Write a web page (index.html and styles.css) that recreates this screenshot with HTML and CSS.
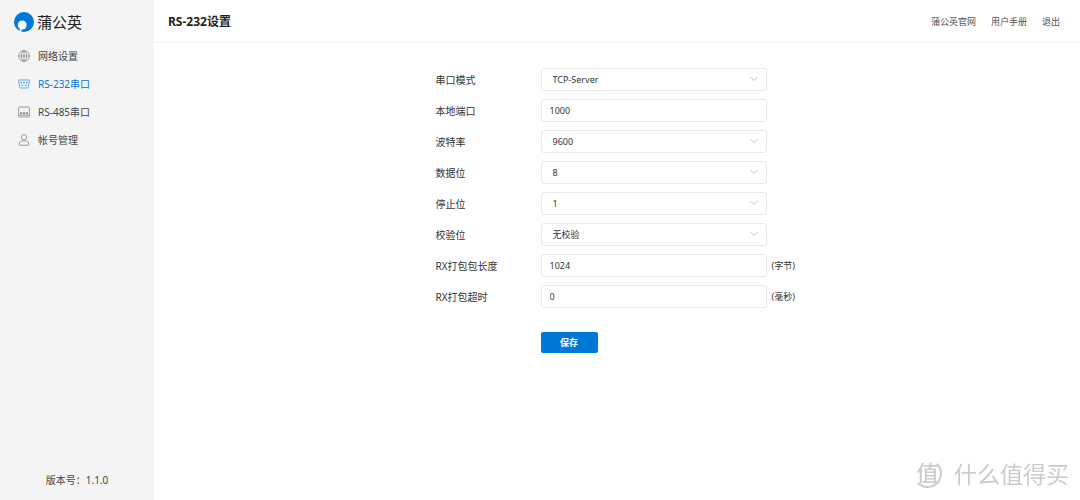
FILE: index.html
```html
<!DOCTYPE html>
<html lang="zh-CN">
<head>
<meta charset="utf-8">
<meta name="viewport" content="width=device-width, initial-scale=1">
<title>RS-232设置</title>
<link rel="stylesheet" href="styles.css">
</head>
<body>
<div class="app">
  <aside class="sidebar">
    <div class="brand">
      <svg class="brand-logo" viewBox="0 0 20 20" aria-hidden="true">
        <circle cx="10" cy="10" r="10" fill="#0078d7"/>
        <circle cx="8.2" cy="13" r="4.5" fill="#f8f8f8"/>
        <path d="M7.600 15.500L5.800 20.500" stroke="#f8f8f8" stroke-width="1.800"/>
      </svg>
      <span class="brand-name">蒲公英</span>
    </div>
    <nav class="nav">
      <a class="nav-item" href="#network">
        <svg class="nav-icon" viewBox="0 0 12 12" aria-hidden="true"><circle cx="6" cy="6" r="5.4"/><ellipse cx="6" cy="6" rx="2.6" ry="5.4"/><path d="M.6 6h10.8M6 .6v10.8"/></svg>
        <span>网络设置</span>
      </a>
      <a class="nav-item nav-item-active" href="#rs232" aria-current="page">
        <svg class="nav-icon" viewBox="0 0 12 12" aria-hidden="true"><path d="M1.3 2h9.4q.8 0 .7.8l-1 6.2q-.2 1-1.2 1H2.800q-1 0-1.200-1l-1-6.200q-.1-.8.7-.8z"/><path class="nav-icon-pins" d="M2.600 4.600h1.400M5.300 4.600h1.400M8 4.600h1.400M3.500 7.400h1.400M7.100 7.400h1.400"/></svg>
        <span>RS-232串口</span>
      </a>
      <a class="nav-item" href="#rs485">
        <svg class="nav-icon" viewBox="0 0 12 12" aria-hidden="true"><rect x=".6" y="1" width="10.800" height="10" rx=".6"/><path d="M.6 9.200h10.800"/><path class="nav-icon-ports" d="M2.200 7.300h2M5 7.300h2M7.800 7.300h2"/></svg>
        <span>RS-485串口</span>
      </a>
      <a class="nav-item" href="#account">
        <svg class="nav-icon" viewBox="0 0 12 12" aria-hidden="true"><circle cx="6" cy="3.300" r="2.600"/><path d="M3.800 6.900h4.400q2.700.5 2.700 3.200 0 1.200-1.200 1.200H2.300q-1.200 0-1.200-1.200 0-2.700 2.700-3.200z"/></svg>
        <span>帐号管理</span>
      </a>
    </nav>
    <p class="version">版本号：1.1.0</p>
  </aside>

  <div class="content">
    <header class="topbar">
      <h1 class="title">RS-232设置</h1>
      <div class="links">
        <a href="#site">蒲公英官网</a>
        <a href="#manual">用户手册</a>
        <a href="#logout">退出</a>
      </div>
    </header>
    <main class="main">
      <form class="form">
        <label for="mode">串口模式</label>
        <div class="select">
          <select class="field" id="mode"><option>TCP-Server</option></select>
          <svg class="chevron" viewBox="0 0 8 6" aria-hidden="true"><path d="M.5 1L4 4.500L7.500 1"/></svg>
        </div>

        <label for="port">本地端口</label>
        <input class="field" id="port" type="text" value="1000">

        <label for="baud">波特率</label>
        <div class="select">
          <select class="field" id="baud"><option>9600</option></select>
          <svg class="chevron" viewBox="0 0 8 6" aria-hidden="true"><path d="M.5 1L4 4.500L7.500 1"/></svg>
        </div>

        <label for="data">数据位</label>
        <div class="select">
          <select class="field" id="data"><option>8</option></select>
          <svg class="chevron" viewBox="0 0 8 6" aria-hidden="true"><path d="M.5 1L4 4.500L7.500 1"/></svg>
        </div>

        <label for="stop">停止位</label>
        <div class="select">
          <select class="field" id="stop"><option>1</option></select>
          <svg class="chevron" viewBox="0 0 8 6" aria-hidden="true"><path d="M.5 1L4 4.500L7.500 1"/></svg>
        </div>

        <label for="parity">校验位</label>
        <div class="select">
          <select class="field" id="parity"><option>无校验</option></select>
          <svg class="chevron" viewBox="0 0 8 6" aria-hidden="true"><path d="M.5 1L4 4.500L7.500 1"/></svg>
        </div>

        <label for="length">RX打包包长度</label>
        <input class="field" id="length" type="text" value="1024">
        <span class="unit">(字节)</span>

        <label for="timeout">RX打包超时</label>
        <input class="field" id="timeout" type="text" value="0">
        <span class="unit">(毫秒)</span>

        <button class="save" type="submit">保存</button>
      </form>
    </main>
  </div>
</div>
<div class="watermark">
  <span class="watermark-mark">值</span>
  <span>什么值得买</span>
</div>
</body>
</html>
```

FILE: styles.css
```css
* {
  box-sizing: border-box;
}

body {
  margin: 0;
  color: #333;
  background: #fff;
  font: 10px/16px "Noto Sans", "Noto Sans CJK SC", sans-serif;
}

a {
  color: inherit;
  text-decoration: none;
}

.app {
  display: flex;
  min-height: 100vh;
}

.sidebar {
  display: flex;
  flex: 0 0 154px;
  flex-direction: column;
  background: #f4f4f4;
}

.brand {
  display: flex;
  align-items: center;
  gap: 3px;
  height: 42px;
  padding: 1px 0 0 14px;
}

.brand-logo {
  width: 20px;
  height: 20px;
}

.brand-name {
  color: #222;
  font-size: 15px;
}

.nav-item {
  display: flex;
  align-items: center;
  gap: 8px;
  height: 28px;
  padding-left: 18px;
  color: #444;
}

.nav-icon {
  width: 12px;
  height: 12px;
  fill: none;
  stroke: #888;
  stroke-width: 0.8;
}

.nav-icon-pins {
  stroke-width: 1.4;
}

.nav-icon-ports {
  stroke-width: 2;
}

.nav-item-active {
  color: #0078d7;
}

.nav-item-active .nav-icon {
  stroke: #3b96e0;
}

.version {
  margin: auto 0 12px;
  color: #444;
  text-align: center;
}

.content {
  flex: 1;
  min-width: 0;
}

.topbar {
  display: flex;
  align-items: center;
  justify-content: space-between;
  height: 43px;
  padding: 2px 20px 0 14px;
  border-bottom: 1px solid #f2f2f2;
}

.title {
  margin: 0;
  color: #222;
  font-size: 12px;
  font-weight: 700;
}

.links {
  display: flex;
  gap: 15px;
  color: #555;
  font-size: 9px;
}

.main {
  padding: 25px 20px;
}

.form {
  display: grid;
  grid-template-columns: 105px 226px 32px;
  justify-content: center;
  align-items: center;
  row-gap: 8px;
}

.form label {
  grid-column: 1;
}

.select {
  position: relative;
}

.field {
  display: block;
  width: 100%;
  height: 23px;
  padding: 0 8px;
  border: 1px solid #e9e9e9;
  border-radius: 3px;
  color: #333;
  background: #fff;
  font: inherit;
  font-size: 9px;
}

.select .field {
  padding: 0 24px 0 11px;
  appearance: none;
}

.chevron {
  position: absolute;
  top: 8px;
  right: 9px;
  width: 8px;
  height: 6px;
  fill: none;
  stroke: #bbb;
  stroke-width: 0.9;
  pointer-events: none;
}

.unit {
  padding-left: 5px;
  font-size: 9px;
  white-space: nowrap;
}

.save {
  grid-column: 2;
  justify-self: start;
  width: 57px;
  height: 21px;
  margin-top: 16px;
  padding: 0;
  border: 0;
  border-radius: 2px;
  color: #fff;
  background: #0078d7;
  font: inherit;
  font-size: 9px;
  font-weight: 700;
}

.watermark {
  position: fixed;
  right: 11px;
  bottom: 12px;
  display: flex;
  align-items: center;
  gap: 12px;
  color: #ccc;
  font-size: 23px;
  line-height: 28px;
  pointer-events: none;
}

.watermark-mark {
  width: 29px;
  height: 29px;
  border: 2px solid #ccc;
  border-top-color: transparent;
  border-left-color: transparent;
  border-radius: 50%;
  font-size: 22px;
  font-weight: 500;
  line-height: 23px;
  text-align: center;
}
```
